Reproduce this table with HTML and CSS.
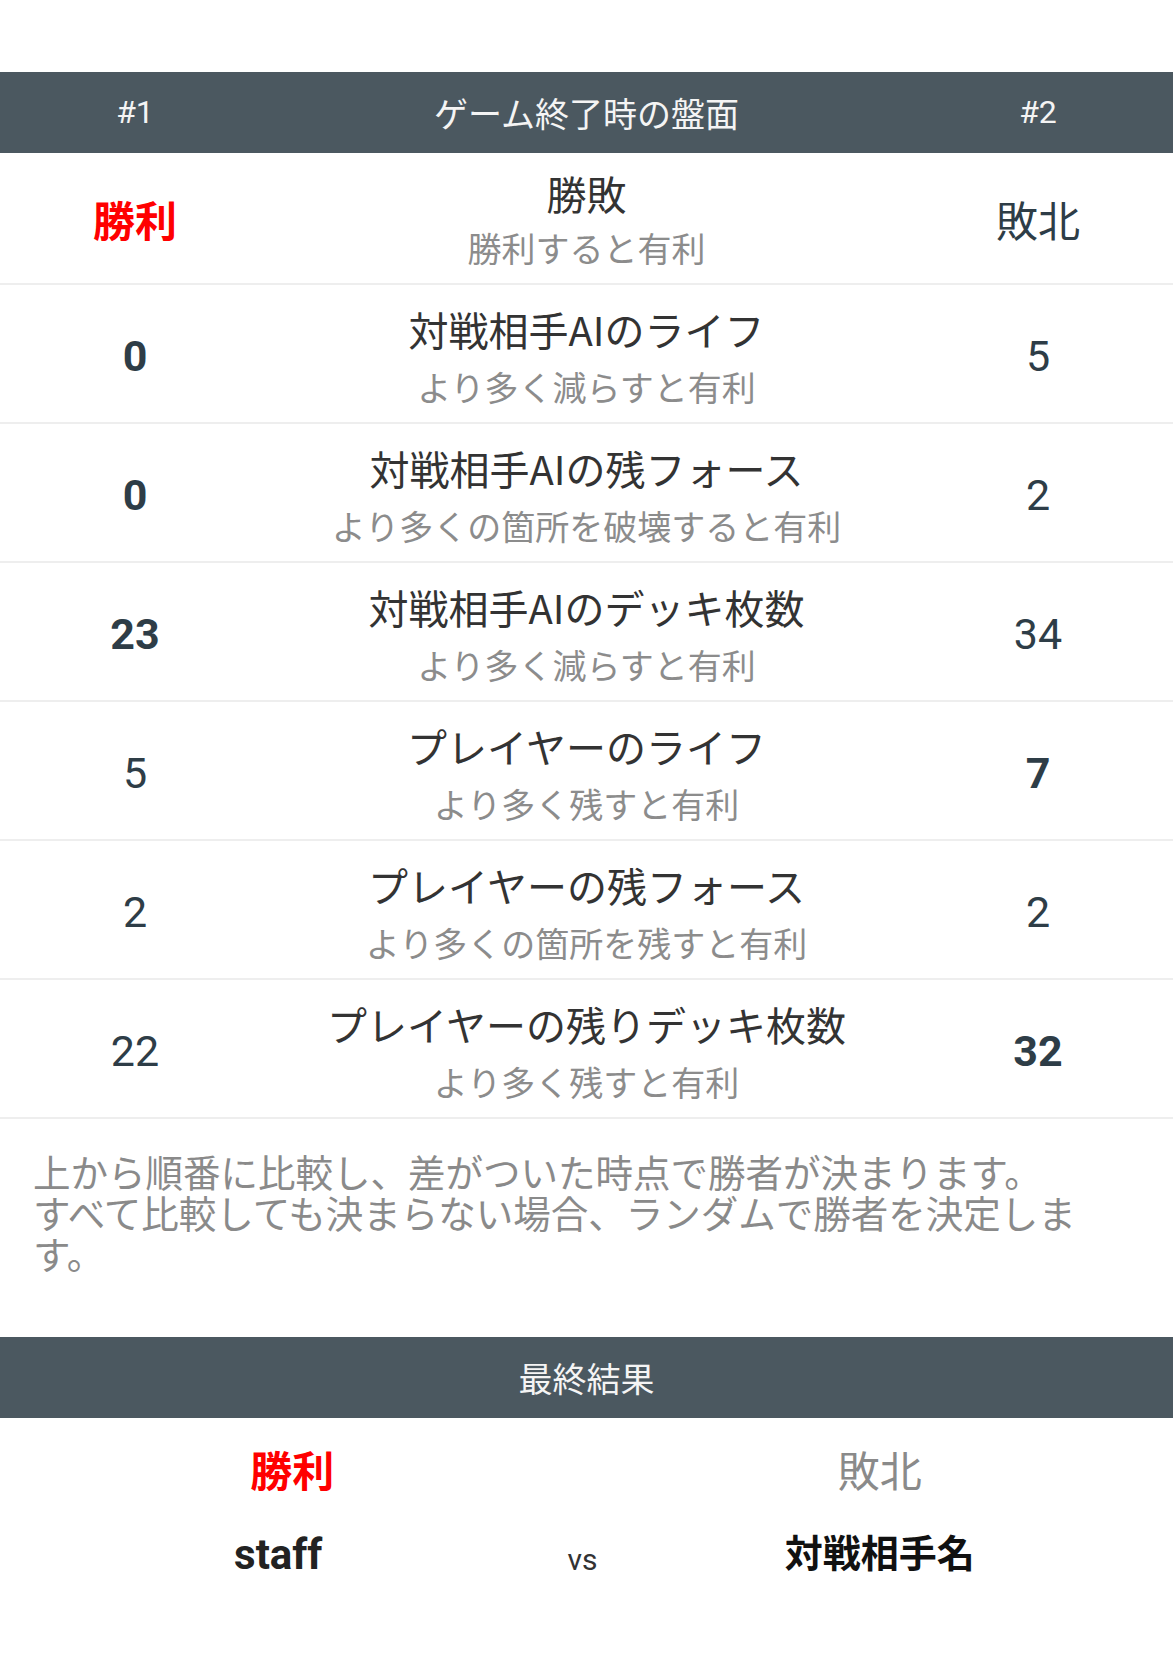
FILE: index.html
```html
<!DOCTYPE html>
<html lang="ja">

<head>
    <meta charset="UTF-8">
    <meta name="viewport" content="width=device-width, initial-scale=1.0">
    <title>ゲーム結果</title>
    <link rel="stylesheet" href="styles.css">
</head>

<body>
    <div class="board">
        <div class="board-head cols">
            <div class="head-num">#1</div>
            <div>ゲーム終了時の盤面</div>
            <div class="head-num">#2</div>
        </div>

        <div class="row row-first cols">
            <div class="val val-win">勝利</div>
            <div class="crit">
                <div class="crit-title">勝敗</div>
                <div class="crit-sub">勝利すると有利</div>
            </div>
            <div class="val val-lose">敗北</div>
        </div>

        <div class="row cols">
            <div class="num bold">0</div>
            <div class="crit">
                <div class="crit-title">対戦相手AIのライフ</div>
                <div class="crit-sub">より多く減らすと有利</div>
            </div>
            <div class="num">5</div>
        </div>

        <div class="row cols">
            <div class="num bold">0</div>
            <div class="crit">
                <div class="crit-title">対戦相手AIの残フォース</div>
                <div class="crit-sub">より多くの箇所を破壊すると有利</div>
            </div>
            <div class="num">2</div>
        </div>

        <div class="row cols">
            <div class="num bold">23</div>
            <div class="crit">
                <div class="crit-title">対戦相手AIのデッキ枚数</div>
                <div class="crit-sub">より多く減らすと有利</div>
            </div>
            <div class="num">34</div>
        </div>

        <div class="row cols">
            <div class="num">5</div>
            <div class="crit">
                <div class="crit-title">プレイヤーのライフ</div>
                <div class="crit-sub">より多く残すと有利</div>
            </div>
            <div class="num bold">7</div>
        </div>

        <div class="row cols">
            <div class="num">2</div>
            <div class="crit">
                <div class="crit-title">プレイヤーの残フォース</div>
                <div class="crit-sub">より多くの箇所を残すと有利</div>
            </div>
            <div class="num">2</div>
        </div>

        <div class="row cols">
            <div class="num">22</div>
            <div class="crit">
                <div class="crit-title">プレイヤーの残りデッキ枚数</div>
                <div class="crit-sub">より多く残すと有利</div>
            </div>
            <div class="num bold">32</div>
        </div>
    </div>

    <p class="note">上から順番に比較し、差がついた時点で勝者が決まります。<br>すべて比較しても決まらない場合、ランダムで勝者を決定します。</p>

    <div class="final">
        <div class="final-head">最終結果</div>
        <div class="final-body">
            <div class="player">
                <div class="player-result result-win">勝利</div>
                <div class="player-name name-latin">staff</div>
            </div>
            <div class="vs">vs</div>
            <div class="player">
                <div class="player-result result-lose">敗北</div>
                <div class="player-name">対戦相手名</div>
            </div>
        </div>
    </div>
</body>

</html>
```

FILE: styles.css
```css
/* General */
body {
    margin: 0;
    background: #fff;
    font-family: "Noto Sans CJK JP", "Noto Sans", sans-serif;
    color: #333;
}

/* Board table */
.board {
    margin-top: 72px;
}

.cols {
    display: grid;
    grid-template-columns: 270px 1fr 270px;
    align-items: center;
    text-align: center;
}

.board-head,
.final-head {
    background: #4b5860;
    color: #f4f4f4;
    font-size: 34px;
    line-height: 81px;
    height: 81px;
}

.head-num {
    font-family: Roboto, "Noto Sans CJK JP", sans-serif;
    font-size: 32px;
}

.row {
    border-bottom: 2px solid #eeeeee;
}

.crit {
    padding: 16px 0 5px;
}

.row-first .crit {
    padding: 12px 0 8px;
}

.crit-title {
    font-size: 40px;
    line-height: 56px;
    color: #333;
}

.crit-sub {
    font-size: 34px;
    line-height: 60px;
    color: #8c8c8c;
}

.row-first .crit-sub {
    line-height: 54px;
}

.val {
    font-size: 42px;
}

.val-win {
    color: #ff0000;
    font-weight: bold;
}

.val-lose {
    color: #2e3d47;
}

.num {
    font-family: Roboto, "Noto Sans CJK JP", sans-serif;
    font-size: 43px;
    color: #2e3d47;
    padding-top: 4px;
}

.bold {
    font-weight: bold;
}

/* Note */
.note {
    margin: 0;
    padding: 31px 44px 64px 33px;
    font-size: 37.5px;
    line-height: 41px;
    color: #8a8a8a;
}

/* Final result */
.final-head {
    text-align: center;
}

.final-body {
    display: grid;
    grid-template-columns: 1fr 32px 1fr;
    padding: 21px 12px 0 4px;
}

.player {
    display: flex;
    flex-direction: column;
    gap: 22px;
    text-align: center;
}

.player-result {
    font-size: 42px;
    line-height: 60px;
}

.result-win {
    color: #ff0000;
    font-weight: bold;
    padding-left: 14px;
}

.result-lose {
    color: #8a8a8a;
}

.player-name {
    font-size: 38px;
    line-height: 60px;
    font-weight: bold;
    color: #111;
}

.name-latin {
    font-family: Roboto, "Noto Sans CJK JP", sans-serif;
    font-size: 42px;
    color: #222;
    padding: 8px 14px 0 0;
    line-height: 52px;
}

.vs {
    align-self: end;
    margin-bottom: 6px;
    font-family: Roboto, sans-serif;
    font-size: 30px;
    line-height: 30px;
    text-align: center;
    color: #333;
}
```
